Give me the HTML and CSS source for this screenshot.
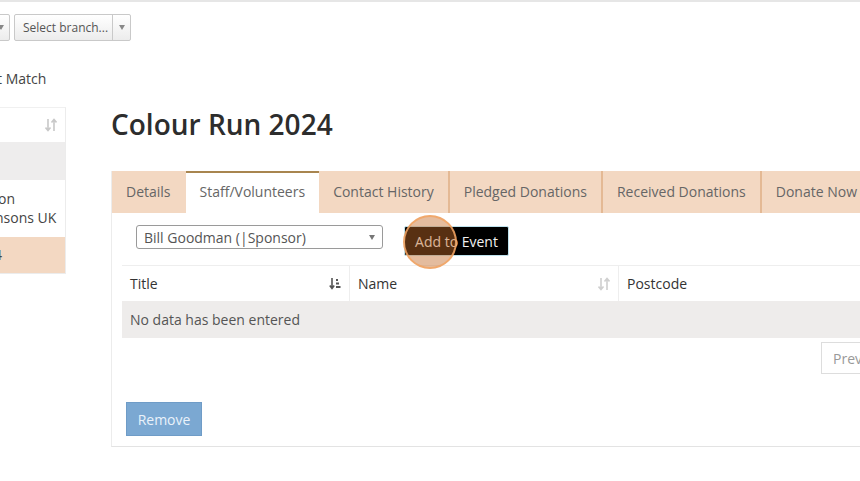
FILE: index.html
```html
<!DOCTYPE html>
<html lang="en">
<head>
  <meta charset="UTF-8">
  <meta name="viewport" content="width=device-width, initial-scale=1.0">
  <title>Colour Run 2024</title>
  <link rel="stylesheet" href="styles.css">
</head>
<body>
  <div class="filters">
    <div class="combo combo-first">
      <span class="combo-text">Select event...</span>
      <span class="combo-arrow"><span class="tri"></span></span>
    </div>
    <div class="combo">
      <span class="combo-text">Select branch...</span>
      <span class="combo-arrow"><span class="tri"></span></span>
    </div>
  </div>

  <div class="sort-text">t Match</div>

  <div class="layout">
    <div class="sidebar">
      <div class="side-head">
        <svg class="sort-icon" width="12" height="14" viewBox="0 0 12 14">
          <path d="M3 1v11M0.5 9.5L3 12.5 5.5 9.5" stroke="#c8c8c8" stroke-width="1.6" fill="none"/>
          <path d="M9 13V2M6.5 4.5L9 1.5 11.5 4.5" stroke="#c8c8c8" stroke-width="1.6" fill="none"/>
        </svg>
      </div>
      <div class="side-row grey"></div>
      <div class="side-row white">
        <span class="line">on</span>
        <span class="line cut">nsons UK</span>
      </div>
      <div class="side-row peach"><span class="cut4">4</span></div>
    </div>

    <div class="main">
      <h1 class="title">Colour Run 2024</h1>

      <div class="panel">
        <div class="tabs">
          <div class="tab">Details</div>
          <div class="tab active">Staff/Volunteers</div>
          <div class="tab">Contact History</div>
          <div class="tab">Pledged Donations</div>
          <div class="tab">Received Donations</div>
          <div class="tab">Donate Now Button</div>
        </div>

        <div class="tab-body">
          <div class="add-row">
            <div class="person-select">
              <span>Bill Goodman (|Sponsor)</span>
              <span class="tri dark"></span>
            </div>
            <div class="add-wrap">
              <button class="add-btn">Add to Event</button>
              <span class="click-ring"></span>
            </div>
          </div>

          <table class="grid">
            <thead>
              <tr>
                <th class="col-title">
                  <div class="th-in">
                    <span>Title</span>
                    <svg width="12" height="13" viewBox="0 0 12 13">
                      <path d="M3 1v10M0.8 8.6L3 11.4 5.2 8.6" stroke="#555" stroke-width="1.6" fill="none"/>
                      <rect x="7" y="2" width="2" height="2" fill="#555"/>
                      <rect x="7" y="5.5" width="3" height="2" fill="#555"/>
                      <rect x="7" y="9" width="4.5" height="2" fill="#555"/>
                    </svg>
                  </div>
                </th>
                <th class="col-name">
                  <div class="th-in">
                    <span>Name</span>
                    <svg width="12" height="14" viewBox="0 0 12 14">
                      <path d="M3 1v11M0.5 9.5L3 12.5 5.5 9.5" stroke="#cfcfcf" stroke-width="1.6" fill="none"/>
                      <path d="M9 13V2M6.5 4.5L9 1.5 11.5 4.5" stroke="#cfcfcf" stroke-width="1.6" fill="none"/>
                    </svg>
                  </div>
                </th>
                <th>Postcode</th>
              </tr>
            </thead>
            <tbody>
              <tr class="empty">
                <td colspan="3">No data has been entered</td>
              </tr>
            </tbody>
          </table>

          <div class="pager">
            <button class="page-btn">Previous</button>
            <button class="page-btn">Next</button>
          </div>

          <button class="remove-btn">Remove</button>
        </div>
      </div>
    </div>
  </div>
</body>
</html>
```

FILE: styles.css
```css
body {
  margin: 0;
  font-family: "Open Sans", Arial, sans-serif;
  font-size: 14px;
  color: #555;
  background: #fff;
  border-top: 2px solid #e6e6e6;
  overflow: hidden;
  height: 479px;
}

/* filter combos at the top */
.filters {
  display: flex;
  gap: 4px;
  margin-top: 12px;
  margin-left: -90px;
  height: 27px;
}

.combo {
  display: flex;
  flex-shrink: 0;
  width: 117px;
  box-sizing: border-box;
  border: 1px solid #c9c9c9;
  border-radius: 2px;
  background: linear-gradient(#fff, #ececec);
  font-size: 12px;
  color: #555;
}

.combo-first {
  width: 100px;
}

.combo-text {
  flex: 1;
  padding-left: 8px;
  line-height: 25px;
  white-space: nowrap;
  overflow: hidden;
}

.combo-arrow {
  width: 17px;
  border-left: 1px solid #c9c9c9;
  display: flex;
  align-items: center;
  justify-content: center;
}

.tri {
  width: 0;
  height: 0;
  border-left: 3px solid transparent;
  border-right: 3px solid transparent;
  border-top: 5px solid #888;
}

.tri.dark {
  border-top-color: #777;
}

.sort-text {
  margin-top: 28px;
  margin-left: -3px;
  line-height: 20px;
  color: #444;
}

/* two columns */
.layout {
  display: flex;
  margin-top: 18px;
}

.sidebar {
  flex-shrink: 0;
  width: 216px;
  margin-left: -151px;
  border: 1px solid #ececec;
  border-left: none;
  border-top: 1px solid #f0f0f0;
  align-self: flex-start;
}

.side-head {
  height: 34px;
  display: flex;
  justify-content: flex-end;
  align-items: center;
  padding-right: 8px;
}

.side-row {
  padding-left: 149px;
  box-sizing: border-box;
  color: #444;
  white-space: nowrap;
}

.side-row.grey {
  background: #eeeded;
  height: 38px;
}

.side-row.white {
  height: 57px;
  padding-top: 9px;
  line-height: 19px;
}

.side-row .line {
  display: block;
}

.side-row .cut {
  margin-left: -3px;
}

.side-row.peach {
  background: #f3d8c2;
  height: 36px;
  line-height: 36px;
}

.cut4 {
  margin-left: -4px;
}

.main {
  flex-shrink: 0;
  margin-left: 45px;
  width: 854px;
}

.title {
  margin: 0 0 30px 0;
  font-size: 28px;
  font-weight: 600;
  line-height: 34px;
  color: #2d2d2d;
}

.panel {
  border-left: 1px solid #ececec;
  border-bottom: 1px solid #e3e3e3;
}

/* tabs */
.tabs {
  display: flex;
  background: #f3d8c2;
  height: 42px;
}

.tab {
  padding: 0 14px;
  line-height: 42px;
  color: #666;
  border-right: 2px solid #e4b994;
  white-space: nowrap;
}

.tab:first-child {
  padding-right: 15px;
  border-right: none;
}

.tab.active {
  background: #fff;
  border-top: 2px solid #a8854f;
  line-height: 38px;
  border-right: none;
  padding: 0 14px;
}

.tab-body {
  padding: 12px 10px 10px 10px;
}

.add-row {
  display: flex;
  align-items: flex-start;
  gap: 21px;
  margin-left: 14px;
}

.person-select {
  width: 247px;
  height: 24px;
  box-sizing: border-box;
  border: 1px solid #9a9a9a;
  border-radius: 3px;
  display: flex;
  align-items: center;
  justify-content: space-between;
  padding: 0 7px 0 7px;
  color: #555;
}

.add-wrap {
  position: relative;
  margin-top: 1px;
}

.add-btn {
  height: 30px;
  width: 105px;
  border: 1px solid #bfe3ee;
  border-radius: 2px;
  background: #000;
  color: #f1f1f1;
  font-family: "Open Sans", Arial, sans-serif;
  font-size: 14px;
  padding: 0;
}

.click-ring {
  position: absolute;
  left: -1px;
  top: -11px;
  width: 50px;
  height: 50px;
  border-radius: 50%;
  border: 2px solid rgba(242, 164, 100, 0.85);
  background: rgba(196, 106, 40, 0.45);
}

/* data table */
.grid {
  border-collapse: collapse;
  width: 100%;
  margin-top: 9px;
}

.grid th {
  text-align: left;
  font-weight: 400;
  color: #333;
  height: 35px;
  padding: 0 8px;
  border-top: 1px solid #eeeeee;
  border-right: 1px solid #eeeeee;
}

.col-title {
  width: 211px;
}

.col-name {
  width: 252px;
}

.th-in {
  display: flex;
  justify-content: space-between;
  align-items: center;
}

.grid .empty td {
  background: #eeeceb;
  height: 37px;
  padding: 0 8px;
  color: #555;
}

.pager {
  display: flex;
  justify-content: flex-end;
  margin-top: 4px;
}

.page-btn {
  height: 32px;
  padding: 0 11px;
  border: 1px solid #ddd;
  background: #fff;
  color: #999;
  font-family: "Open Sans", Arial, sans-serif;
  font-size: 14px;
  margin-left: -1px;
}

.remove-btn {
  margin-top: 28px;
  margin-left: 4px;
  height: 34px;
  width: 76px;
  border: 1px solid #6f9cc7;
  background: #7ba8d2;
  color: #eaf2fa;
  font-family: "Open Sans", Arial, sans-serif;
  font-size: 14px;
  padding: 0;
}
```
